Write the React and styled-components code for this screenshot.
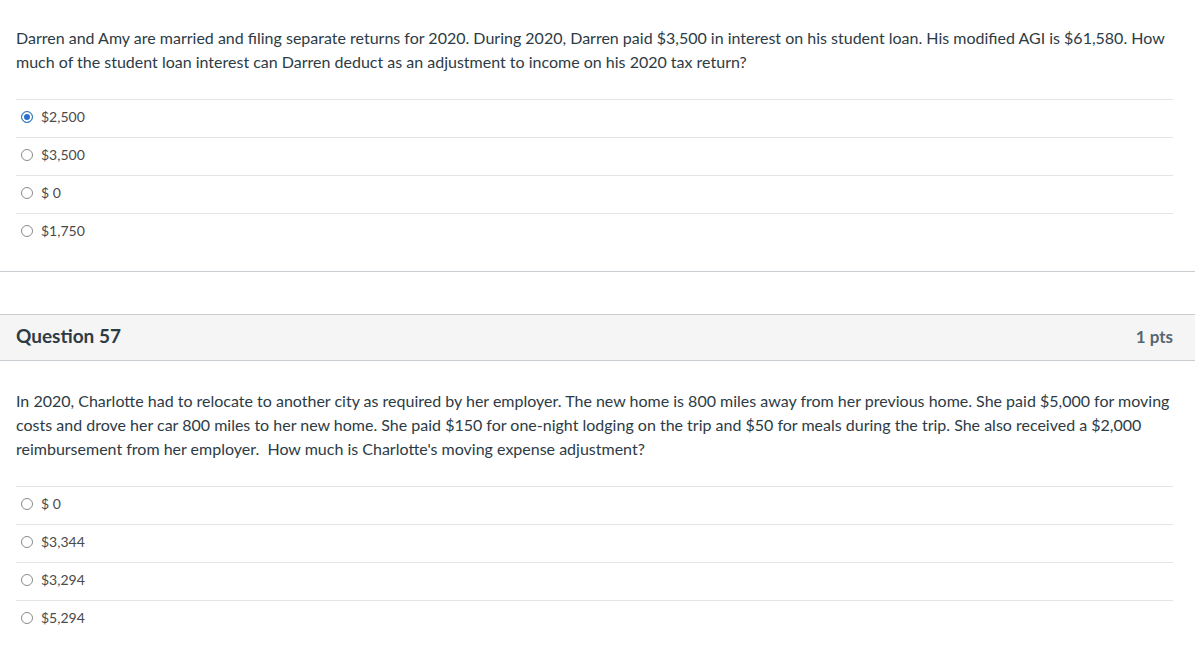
import React from 'react';
import styled, { createGlobalStyle } from 'styled-components';

const GlobalStyle = createGlobalStyle`
  body {
    margin: 0;
    background: #fff;
    font-family: Lato, "Open Sans", "Liberation Sans", sans-serif;
    color: #2d3b45;
  }
`;

const Page = styled.div`
  width: 1195px;
  padding-top: 26px;
`;

const Question = styled.section`
  padding-bottom: ${(p) => p.$bottom || 20}px;
  border-bottom: ${(p) => (p.$divided ? '1px solid #c7cdd1' : 'none')};
`;

const Header = styled.div`
  display: flex;
  align-items: center;
  justify-content: space-between;
  height: 45px;
  padding: 0 22px 0 16px;
  background: #f5f5f5;
  border-top: 1px solid #c7cdd1;
  border-bottom: 1px solid #c7cdd1;
  margin-top: 42px;
`;

const Title = styled.h2`
  margin: 0 0 5px;
  font-size: 19px;
  font-weight: 700;
  color: #2d3b45;
`;

const Points = styled.span`
  margin-bottom: 2px;
  font-size: 17px;
  font-weight: 700;
  color: #556572;
`;

const Text = styled.p`
  margin: ${(p) => p.$top || 0}px 22px 0 16px;
  font-size: 16px;
  line-height: 24px;
  color: #2d3b45;
`;

const Answers = styled.div`
  margin: ${(p) => p.$top}px 22px 0 16px;
`;

const Answer = styled.label`
  display: flex;
  align-items: center;
  gap: 8px;
  height: 32px;
  border-top: 1px solid #e2e5e7;
  padding-left: 5px;
  padding-bottom: 5px;
  box-sizing: content-box;
  font-size: 14px;
  color: #4a4a4a;
`;

const Radio = styled.span`
  width: 10px;
  height: 10px;
  border-radius: 50%;
  border: 1px solid ${(p) => (p.$checked ? '#2b7abc' : '#8a8a8a')};
  background: ${(p) => (p.$checked ? '#2b6fd1' : '#fff')};
  box-shadow: ${(p) => (p.$checked ? 'inset 0 0 0 2px #fff' : 'none')};
  flex-shrink: 0;
  margin-top: 2px;
`;

const AnswerList = ({ items, checked, top }) => (
  <Answers $top={top}>
    {items.map((a) => (
      <Answer key={a}>
        <Radio $checked={a === checked} />
        {a}
      </Answer>
    ))}
  </Answers>
);

export default function App() {
  return (
    <Page>
      <GlobalStyle />
      <Question $divided $bottom={20}>
        <Text>
          Darren and Amy are married and filing separate returns for 2020. During 2020, Darren paid $3,500 in interest on his student loan. His modified AGI is $61,580. How much of the student loan interest can Darren deduct as an adjustment to income on his 2020 tax return?
        </Text>
        <AnswerList top={25} items={['$2,500', '$3,500', '$ 0', '$1,750']} checked="$2,500" />
      </Question>

      <Question $bottom={0}>
        <Header>
          <Title>Question 57</Title>
          <Points>1 pts</Points>
        </Header>
        <Text $top={28}>
          In 2020, Charlotte had to relocate to another city as required by her employer. The new home is 800 miles away from her previous home. She paid $5,000 for moving costs and drove her car 800 miles to her new home. She paid $150 for one-night lodging on the trip and $50 for meals during the trip. She also received a $2,000 reimbursement from her employer.&nbsp; How much is Charlotte's moving expense adjustment?
        </Text>
        <AnswerList top={25} items={['$ 0', '$3,344', '$3,294', '$5,294']} />
      </Question>
    </Page>
  );
}
